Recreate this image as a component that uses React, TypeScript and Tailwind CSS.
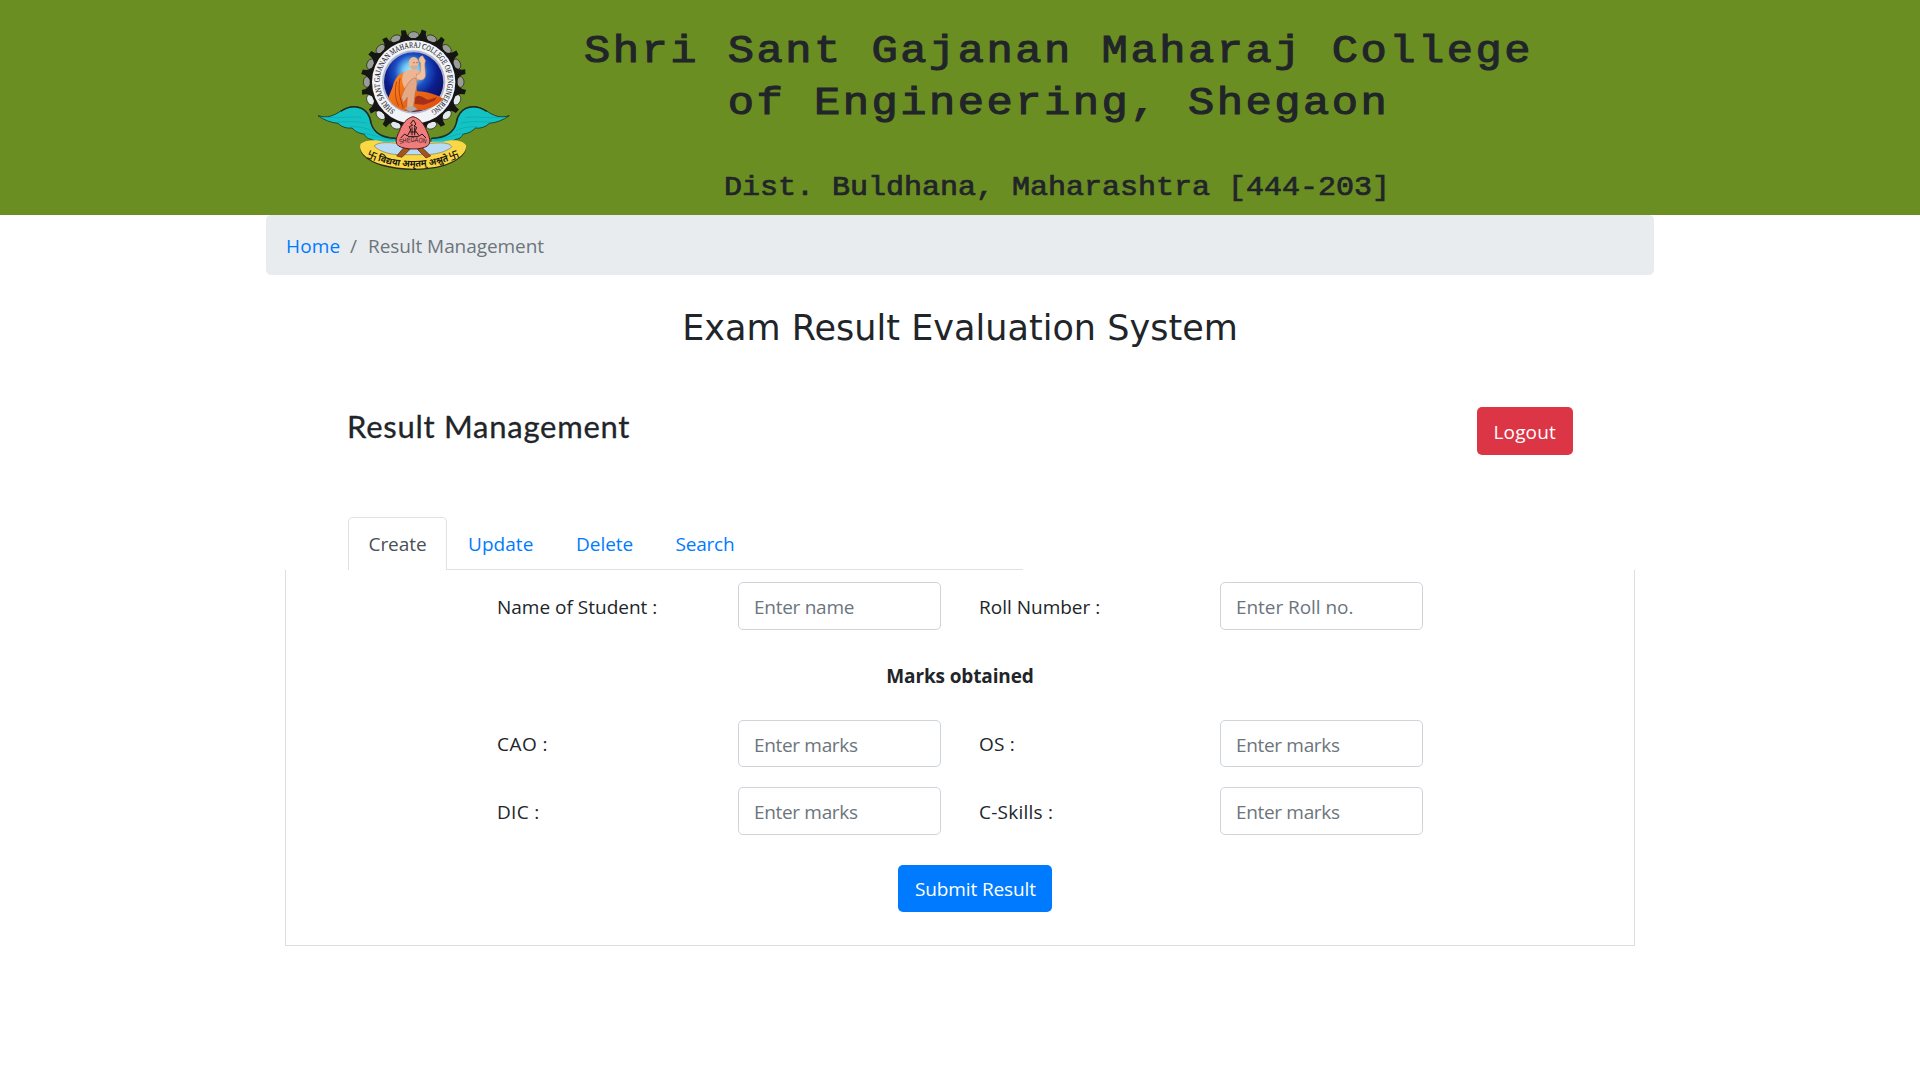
const TEETH = Array.from({ length: 16 }, (_, i) => i * 22.5);

function Wing() {
  return (
    <>
      <path
        d="M54 317 C82 325 100 318 122 303 C142 290 166 286 184 294 C204 303 212 320 214 340 C220 362 240 382 288 384 L290 396 C270 405 240 402 214 388 C200 386 196 378 192 372 C174 370 164 362 156 354 C138 356 124 350 114 340 C92 338 72 330 54 317 Z"
        fill="#13c3c4"
        stroke="#15322a"
        strokeWidth="2.5"
      />
      <path
        d="M80 322 C120 326 150 318 186 322 M110 336 C140 336 168 332 200 340 M150 350 C175 350 195 352 214 362 M190 370 C210 372 235 382 280 390"
        fill="none"
        stroke="#0fa5ac"
        strokeWidth="2"
      />
      <path
        d="M122 304 C142 291 166 287 184 295 C204 304 210 320 213 340 C220 364 242 384 288 386"
        fill="none"
        stroke="#1d2a22"
        strokeWidth="4"
      />
    </>
  );
}

function CollegeLogo() {
  return (
    <svg viewBox="0 0 690 540" className="h-[180px] w-[230px] shrink-0">
      <defs>
        <radialGradient id="sky" cx="0.46" cy="0.32" r="0.62">
          <stop offset="0" stopColor="#b4f0ff" />
          <stop offset="0.22" stopColor="#6cc8f6" />
          <stop offset="0.45" stopColor="#1c50c4" />
          <stop offset="0.7" stopColor="#0c1f90" />
          <stop offset="1" stopColor="#081264" />
        </radialGradient>
        <linearGradient id="robe" x1="0" y1="0" x2="1" y2="1">
          <stop offset="0" stopColor="#ff8a1c" />
          <stop offset="1" stopColor="#d94a0c" />
        </linearGradient>
        <path id="ring" d="M285.500 300.500 A102 102 0 1 1 396.500 300.500" />
        <path id="motto" d="M202 440 Q341 502 482 438" />
        <path id="town" d="M299 402 Q339 390 382 402" />
      </defs>

      {/* gear wheel */}
      {TEETH.map((a) => (
        <ellipse
          key={a}
          transform={`rotate(${a} 341 216)`}
          cx="341"
          cy="76"
          rx="16"
          ry="11"
          fill={a > 100 && a < 260 ? "#e3e8ec" : "#9a9c98"}
          stroke="#1c1c1c"
          strokeWidth="2"
        />
      ))}
      {TEETH.map((a) => (
        <path
          key={a}
          transform={`rotate(${a + 11.25} 341 216)`}
          d="M310 92 Q334 84 334 57 L348 59 Q347 84 372 92 L366 104 L316 104 Z"
          fill="#151515"
        />
      ))}
      <circle cx="341" cy="216" r="132" fill="#151515" />
      <circle cx="341" cy="216" r="125" fill="#f2f3f7" />
      <circle cx="341" cy="216" r="95" fill="#b4b6ce" />
      <circle cx="341" cy="216" r="89" fill="url(#sky)" />
      <text fontFamily="'Liberation Serif', serif" fontSize="24" fill="#1d1d28" stroke="#1d1d28" strokeWidth="0.3">
        <textPath href="#ring" textLength="528" lengthAdjust="spacingAndGlyphs">
          SHRI SANT GAJANAN MAHARAJ COLLEGE OF ENGINEERING
        </textPath>
      </text>

      {/* seated saint */}
      <path d="M316 186 C296 190 284 206 278 230 C270 252 264 262 266 268 C280 290 306 304 330 304 L372 300 C400 292 418 280 430 266 C410 254 386 246 352 244 L340 204 Z" fill="url(#robe)" />
      <path d="M290 215 C284 240 284 262 296 288 M300 205 C294 236 298 262 310 294" fill="none" stroke="#b8440e" strokeWidth="3" />
      <path d="M310 190 C322 176 348 174 360 184 L360 208 C352 214 346 210 340 220 L328 246 C312 240 300 214 310 190 Z" fill="#edb593" />
      <path d="M350 192 C362 196 363 180 361 158 C352 150 358 138 368 137 L377 152 C371 162 378 184 376 200 C370 214 356 212 348 204 Z" fill="#f2c3a2" stroke="#b5785a" strokeWidth="1.5" />
      <path d="M304 262 C314 232 330 206 344 204 C354 208 352 226 346 248 L340 292 L320 294 L322 262 L310 278 Z" fill="#e5a884" stroke="#a86646" strokeWidth="1.5" />
      <path d="M346 262 C356 250 370 262 384 270 L410 262 L404 272 L372 284 L344 282 Z" fill="#a62f1c" />
      <ellipse cx="341" cy="160" rx="15" ry="19" fill="#efba98" />
      <path d="M331 171 C336 182 348 182 354 171 L352 165 L333 167 Z" fill="#c9b3a0" />
      <path d="M340 158 h4 M349 158 h4" stroke="#5d2f20" strokeWidth="2" />
      <path d="M314 294 L340 288 L352 298 L330 306 Z" fill="#b0aaa0" />

      {/* wings */}
      <Wing />
      <g transform="translate(682 0) scale(-1 1)">
        <Wing />
      </g>

      {/* ribbon and motto */}
      <path d="M182 400 C200 386 230 388 252 394 L430 394 C456 386 486 388 498 404 C502 428 470 452 430 464 C370 480 300 478 244 462 C206 450 172 426 182 400 Z" fill="#2a2a18" transform="translate(0 5)" />
      <path d="M182 400 C200 386 230 388 252 394 L430 394 C456 386 486 388 498 404 C502 428 470 452 430 464 C370 480 300 478 244 462 C206 450 172 426 182 400 Z" fill="#fbd745" transform="translate(0 1)" />
      <path d="M222 408 C236 394 270 398 292 400 L392 400 C420 398 446 396 456 410 C440 426 404 434 376 434 L308 434 C276 436 240 426 222 408 Z" fill="#b9dcf4" stroke="#7b7a50" strokeWidth="2" />
      <path d="M312 412 L290 438 L306 442 L330 418 Z M366 412 L392 438 L378 444 L352 418 Z" fill="#a4541c" stroke="#4a2a12" strokeWidth="2" />
      <text fontFamily="'Noto Sans', sans-serif" fontSize="28" fontWeight="700" fill="#16160e">
        <textPath href="#motto" textLength="284" lengthAdjust="spacingAndGlyphs">
          卐 विद्यया अमृतम् अश्नुते 卐
        </textPath>
      </text>

      {/* town badge */}
      <path d="M339 320 C320 324 306 342 298 364 C288 384 284 398 296 408 C316 420 364 420 382 408 C394 398 390 384 380 362 C372 342 358 324 339 320 Z" fill="#f07c7c" stroke="#4a1c1c" strokeWidth="3" />
      <path d="M302 384 L314 372 L322 378 L332 360 L328 350 L338 346 L332 340 L340 330 L348 342 L342 348 L350 352 L346 362 L358 378 L366 372 L378 384 M330 366 L348 366 M324 380 L356 380 M336 352 V376 M344 352 V376" fill="none" stroke="#1f1414" strokeWidth="3" />
      <text fontFamily="'Liberation Sans', sans-serif" fontSize="20" fill="#1f1414">
        <textPath href="#town" textLength="80" lengthAdjust="spacingAndGlyphs">
          SHEGAON
        </textPath>
      </text>
    </svg>
  );
}

const inputBase =
  "w-[203px] rounded-[5px] border border-[#ced4da] bg-white pt-[9px] pl-[15px] leading-[30px] placeholder:text-[#6c757d] placeholder:opacity-100 outline-none";

const titleLine = "block h-[52px] origin-[50%_37px] scale-y-[0.88]";

export default function App() {
  return (
    <div className="min-h-[1080px] w-full bg-white font-['Open_Sans','Noto_Sans',sans-serif] text-[19px] leading-[30px] text-[#212529]">
      <header className="flex h-[215px] bg-[#6b8e23] pl-[300px]">
        <div className="pt-[10px]">
          <CollegeLogo />
        </div>
        <div className="ml-[28px] w-[1001px] text-center font-['Liberation_Mono',monospace] font-normal">
          <h1 className="pt-[25px] text-[43.75px] leading-[52px] tracking-[2.5px] [-webkit-text-stroke:1.2px_#212529]">
            <span className={titleLine}>Shri Sant Gajanan Maharaj College</span>
            <span className={titleLine}>of Engineering, Shegaon</span>
          </h1>
          <h4 className="mt-[40px] mr-[3px] h-[36px] origin-[50%_26px] scale-y-[0.93] text-[30px] leading-[36px] [-webkit-text-stroke:0.8px_#212529]">
            Dist. Buldhana, Maharashtra [444-203]
          </h4>
        </div>
      </header>

      <nav className="mx-auto flex h-[60px] w-[1388px] rounded-[5px] bg-[#e9ecef] pt-[16px] pl-[20px]">
        <a className="w-[64px] tracking-[0.12px] text-[#007bff]">Home</a>
        <span className="w-[18px] text-[#6c757d]">/</span>
        <span className="tracking-[-0.07px] text-[#6c757d]">Result Management</span>
      </nav>

      <h2 className="pt-[32px] text-center font-['DejaVu_Sans',sans-serif] text-[35px] leading-[42px] tracking-[0.02px]">
        Exam Result Evaluation System
      </h2>

      <main className="mx-auto w-[1350px]">
        <div className="flex h-[168px] justify-between pt-[57px] pr-[62px] pl-[62px]">
          <h3 className="font-['Lato',sans-serif] text-[31px] leading-[40px] tracking-[0.74px] [-webkit-text-stroke:0.3px_#212529]">
            Result Management
          </h3>
          <button className="mt-[1px] flex h-[48px] w-[96px] items-start rounded-[5px] bg-[#dc3545] pt-[10px] pl-[16.5px] tracking-[0.15px] text-white">
            Logout
          </button>
        </div>

        <div className="ml-[63px] flex h-[53px] w-[675px] border-b border-[#dee2e6]">
          <a className="h-[53px] w-[99px] rounded-t-[5px] border border-b-0 border-[#dee2e6] bg-white pt-[11px] pl-[19.5px] tracking-[-0.07px] text-[#495057]">
            Create
          </a>
          <a className="w-[108px] pt-[12px] pl-[21px] tracking-[0.05px] text-[#007bff]">Update</a>
          <a className="w-[99px] pt-[12px] pl-[21px] tracking-[-0.04px] text-[#007bff]">Delete</a>
          <a className="pt-[12px] pl-[21.5px] tracking-[-0.2px] text-[#007bff]">Search</a>
        </div>

        <section className="h-[376px] border border-t-0 border-[#dedede] pl-[211px]">
          <div className="grid grid-cols-[241px_241px_241px_203px] items-start pt-[12px]">
            <label className="pt-[10px]">Name of Student :</label>
            <input className={`${inputBase} h-[48px] pb-[7px] tracking-[-0.27px]`} placeholder="Enter name" />
            <label className="pt-[10px]">Roll Number :</label>
            <input className={`${inputBase} h-[48px] pb-[7px] tracking-[-0.05px]`} placeholder="Enter Roll no." />
          </div>

          <p className="mt-[31px] mr-[211px] text-center font-bold tracking-[-0.13px]">Marks obtained</p>

          <div className="mt-[29px] grid grid-cols-[241px_241px_241px_203px] items-start">
            <label className="pt-[9px] tracking-[0.45px]">CAO :</label>
            <input className={`${inputBase} h-[47px] pb-[6px] tracking-[-0.33px]`} placeholder="Enter marks" />
            <label className="pt-[9px] tracking-[0.2px]">OS :</label>
            <input className={`${inputBase} h-[47px] pb-[6px] tracking-[-0.33px]`} placeholder="Enter marks" />
          </div>

          <div className="mt-[20px] grid grid-cols-[241px_241px_241px_203px] items-start">
            <label className="pt-[10px] tracking-[0.3px]">DIC :</label>
            <input className={`${inputBase} h-[48px] pb-[7px] tracking-[-0.33px]`} placeholder="Enter marks" />
            <label className="pt-[10px] tracking-[0.25px]">C-Skills :</label>
            <input className={`${inputBase} h-[48px] pb-[7px] tracking-[-0.33px]`} placeholder="Enter marks" />
          </div>

          <button className="mt-[30px] ml-[401px] flex h-[47px] w-[154px] items-start rounded-[5px] bg-[#007bff] pt-[9px] pl-[17px] tracking-[-0.13px] whitespace-nowrap text-white">
            Submit Result
          </button>
        </section>
      </main>
    </div>
  );
}
